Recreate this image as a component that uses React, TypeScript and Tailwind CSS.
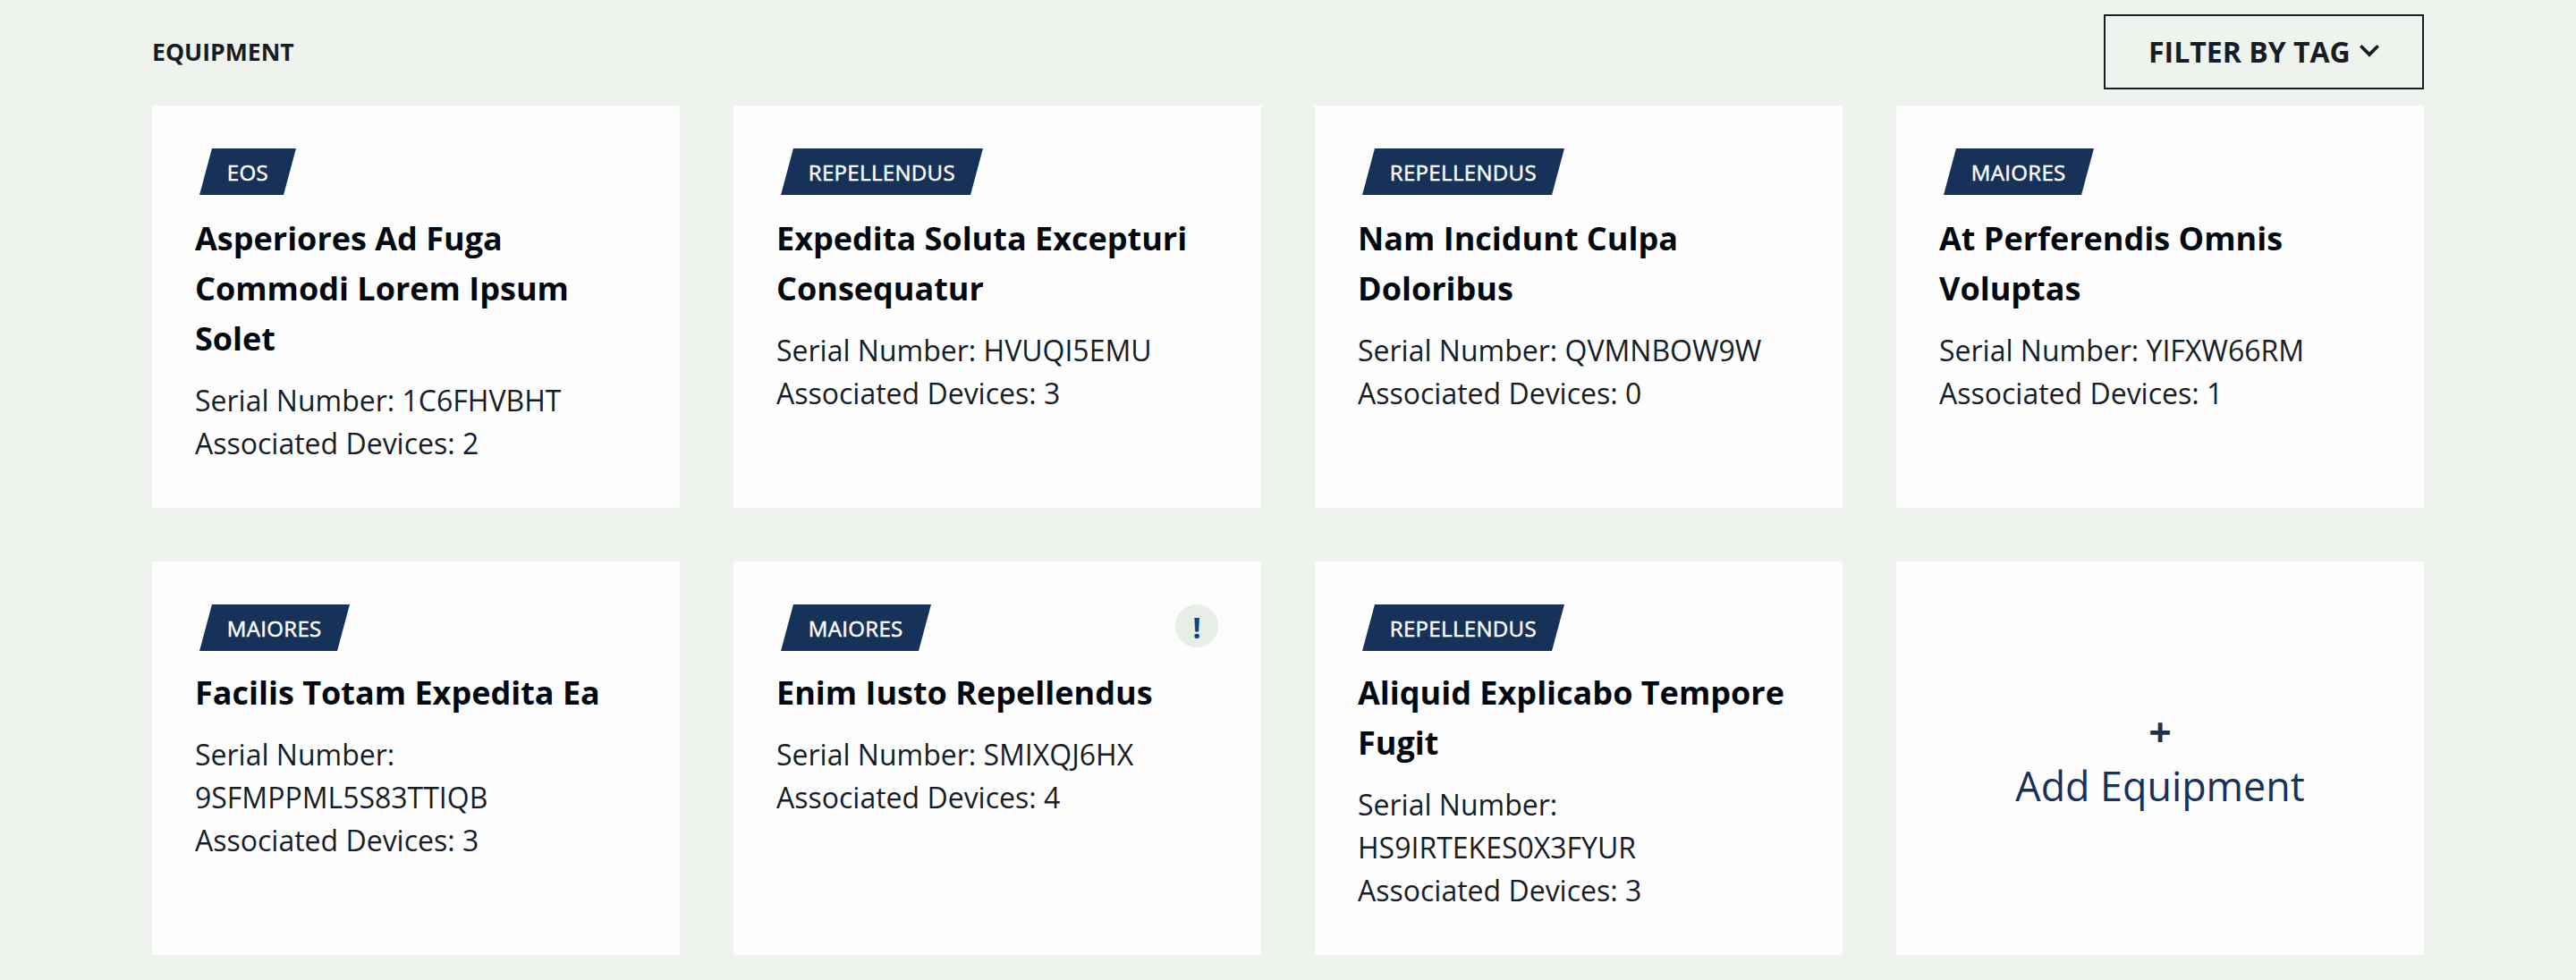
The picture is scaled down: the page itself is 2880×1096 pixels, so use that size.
import React from 'react';

type Equipment = {
  tag: string;
  title: string;
  serial: string;
  devices: number;
  alert?: boolean;
};

const equipment: Equipment[] = [
  { tag: 'EOS', title: 'Asperiores Ad Fuga Commodi Lorem Ipsum Solet', serial: '1C6FHVBHT', devices: 2 },
  { tag: 'REPELLENDUS', title: 'Expedita Soluta Excepturi Consequatur', serial: 'HVUQI5EMU', devices: 3 },
  { tag: 'REPELLENDUS', title: 'Nam Incidunt Culpa Doloribus', serial: 'QVMNBOW9W', devices: 0 },
  { tag: 'MAIORES', title: 'At Perferendis Omnis Voluptas', serial: 'YIFXW66RM', devices: 1 },
  { tag: 'MAIORES', title: 'Facilis Totam Expedita Ea', serial: '9SFMPPML5S83TTIQB', devices: 3 },
  { tag: 'MAIORES', title: 'Enim Iusto Repellendus', serial: 'SMIXQJ6HX', devices: 4, alert: true },
  { tag: 'REPELLENDUS', title: 'Aliquid Explicabo Tempore Fugit', serial: 'HS9IRTEKES0X3FYUR', devices: 3 },
];

function Tag({ label }: { label: string }) {
  return (
    <div className="ml-3 h-[52px] -skew-x-[15deg] bg-[#163259] px-6">
      <span className="block skew-x-[15deg] text-2xl leading-[54px] tracking-[0.34px] text-[#fdfdfd] [-webkit-text-stroke:0.5px_#fdfdfd]">
        {label}
      </span>
    </div>
  );
}

function Card({ item, tall }: { item: Equipment; tall: boolean }) {
  return (
    <article className="bg-[#fdfdfd] p-12">
      <div className="flex h-[52px] items-start justify-between">
        <Tag label={item.tag} />
        {item.alert && (
          <span className="flex size-12 justify-center rounded-full bg-[#e6eee6] text-[32px] leading-[52px] font-bold text-[#15437a]">
            !
          </span>
        )}
      </div>
      <h3 className={`${tall ? 'mt-[21px]' : 'mt-[19px]'} text-4xl leading-[56px] font-bold text-[#02080f]`}>
        {item.title}
      </h3>
      <div className="mt-[17px] text-[32px] leading-[48px] text-[#171d26]">
        <p>Serial Number: {item.serial}</p>
        <p>Associated Devices: {item.devices}</p>
      </div>
    </article>
  );
}

export default function App() {
  return (
    <main className="h-[1096px] w-[2880px] overflow-hidden bg-[#eef3ed] px-[170px] pt-4 font-['Open_Sans',sans-serif]">
      <header className="flex h-[84px] items-center justify-between text-[#171d26]">
        <h2 className="text-[26.6px] leading-10 font-bold">EQUIPMENT</h2>
        <button className="flex h-[84px] w-[358px] items-center justify-between border-2 border-[#171d26] px-12 text-[32px] leading-[48px] font-bold whitespace-nowrap">
          FILTER BY TAG
          <svg className="-mt-[2px] h-[14px] w-[22px]" viewBox="0 0 22 14" fill="currentColor">
            <path d="M2.6 0L11 8.2L19.4 0L22 2.6L11 13.8L0 2.6Z" />
          </svg>
        </button>
      </header>
      <section className="mt-[18px] grid grid-cols-4 grid-rows-[450px_440px] gap-[60px]">
        {equipment.map((item, i) => (
          <Card key={item.serial} item={item} tall={i < 4} />
        ))}
        <button className="flex flex-col items-center justify-center bg-[#fdfdfd] text-[44.8px] leading-[61px] text-[#163259]">
          <span className="font-bold">+</span>
          <span>Add Equipment</span>
        </button>
      </section>
    </main>
  );
}
